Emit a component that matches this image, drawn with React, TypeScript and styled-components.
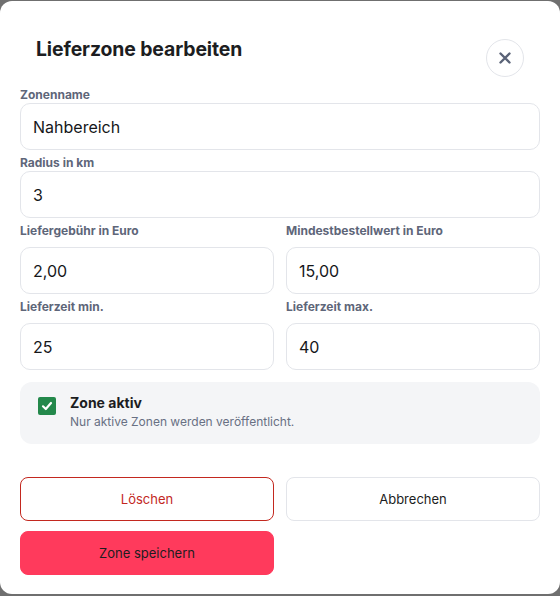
import React, { useState } from 'react'
import styled, { createGlobalStyle } from 'styled-components'

const GlobalStyle = createGlobalStyle`
  html, body {
    margin: 0;
    padding: 0;
    background: #6f6f6f;
    font-family: Inter, "Noto Sans", sans-serif;
  }
  * {
    box-sizing: border-box;
  }
`

const Backdrop = styled.div`
  padding-top: 1px;
  height: 596px;
  overflow: hidden;
`

const Panel = styled.div`
  background: #ffffff;
  border-radius: 12px;
  height: 593px;
  padding: 0 20px;
  display: flex;
  flex-direction: column;
`

const Header = styled.div`
  display: flex;
  justify-content: space-between;
  align-items: flex-start;
  padding: 35px 16px 0 16px;
  margin-bottom: 10px;
`

const Title = styled.h2`
  margin: 0;
  font-size: 19.4px;
  line-height: 26px;
  font-weight: 700;
  color: #1c1d21;
  letter-spacing: -0.1px;
`

const CloseButton = styled.button`
  width: 38px;
  height: 38px;
  margin-top: 3px;
  border-radius: 50%;
  border: 1px solid #e3e5ea;
  background: #ffffff;
  display: flex;
  align-items: center;
  justify-content: center;
  padding: 0;
  cursor: pointer;
`

const Field = styled.label<{ wide?: boolean }>`
  display: flex;
  flex-direction: column;
  gap: ${props => props.wide ? '0' : '8px'};
  margin-bottom: 5px;
`

const Label = styled.span`
  font-size: 12px;
  line-height: 16px;
  font-weight: 700;
  color: #5e6679;
`

const Input = styled.input`
  height: 47px;
  width: 100%;
  border: 1px solid #e3e5ea;
  border-radius: 10px;
  padding: 0 12px;
  font-family: inherit;
  font-size: 16px;
  color: #16171a;
  background: #ffffff;

  &:focus {
    outline: none;
  }
`

const Row = styled.div`
  display: grid;
  grid-template-columns: 1fr 1fr;
  column-gap: 12px;
`

const ActiveBox = styled.div`
  margin-top: 7px;
  background: #f4f5f7;
  border-radius: 12px;
  height: 62px;
  display: flex;
  align-items: flex-start;
  padding: 12px 18px;
  gap: 14px;
`

const Check = styled.button<{ checked: boolean }>`
  width: 18px;
  height: 18px;
  margin-top: 3px;
  border-radius: 2px;
  border: none;
  padding: 0;
  background: ${props => props.checked ? '#23884b' : '#ffffff'};
  display: flex;
  align-items: center;
  justify-content: center;
  cursor: pointer;
`

const CheckText = styled.div`
  display: flex;
  flex-direction: column;
`

const CheckTitle = styled.span`
  font-size: 14px;
  line-height: 18px;
  font-weight: 700;
  color: #1c1d21;
`

const CheckHint = styled.span`
  margin-top: 2px;
  font-size: 12px;
  line-height: 16px;
  color: #687083;
`

const Actions = styled.div`
  margin-top: 33px;
  display: grid;
  grid-template-columns: 1fr 1fr;
  column-gap: 12px;
  row-gap: 10px;
`

type ButtonProps = {
  variant: 'danger' | 'plain' | 'primary'
}

const Button = styled.button<ButtonProps>`
  height: 44px;
  border-radius: 8px;
  font-family: inherit;
  font-size: 13px;
  cursor: pointer;
  border: 1px solid ${props =>
    props.variant === 'danger' ? '#c3281f' : props.variant === 'plain' ? '#e3e5ea' : '#ff3a5c'};
  background: ${props => props.variant === 'primary' ? '#ff3a5c' : '#ffffff'};
  color: ${props => props.variant === 'danger' ? '#c3281f' : '#1c1d21'};
`

function App() {
  const [name, setName] = useState('Nahbereich')
  const [radius, setRadius] = useState('3')
  const [fee, setFee] = useState('2,00')
  const [minOrder, setMinOrder] = useState('15,00')
  const [minTime, setMinTime] = useState('25')
  const [maxTime, setMaxTime] = useState('40')
  const [active, setActive] = useState(true)

  return (
    <Backdrop>
      <GlobalStyle />
      <Panel>
        <Header>
          <Title>Lieferzone bearbeiten</Title>
          <CloseButton aria-label='Schließen'>
            <svg width='14' height='14' viewBox='0 0 14 14'>
              <path d='M2.5 2.5 L11.5 11.5 M11.5 2.5 L2.5 11.5' stroke='#5a6377' strokeWidth='2.4' strokeLinecap='round' />
            </svg>
          </CloseButton>
        </Header>

        <Field wide>
          <Label>Zonenname</Label>
          <Input value={name} onChange={e => setName(e.target.value)} />
        </Field>

        <Field wide>
          <Label>Radius in km</Label>
          <Input value={radius} onChange={e => setRadius(e.target.value)} />
        </Field>

        <Row>
          <Field>
            <Label>Liefergebühr in Euro</Label>
            <Input value={fee} onChange={e => setFee(e.target.value)} />
          </Field>
          <Field>
            <Label>Mindestbestellwert in Euro</Label>
            <Input value={minOrder} onChange={e => setMinOrder(e.target.value)} />
          </Field>
        </Row>

        <Row>
          <Field>
            <Label>Lieferzeit min.</Label>
            <Input value={minTime} onChange={e => setMinTime(e.target.value)} />
          </Field>
          <Field>
            <Label>Lieferzeit max.</Label>
            <Input value={maxTime} onChange={e => setMaxTime(e.target.value)} />
          </Field>
        </Row>

        <ActiveBox>
          <Check checked={active} onClick={() => setActive(!active)} aria-label='Zone aktiv'>
            {active && (
              <svg width='12' height='12' viewBox='0 0 12 12'>
                <path d='M2 6.3 L4.8 9 L10 3' stroke='#ffffff' strokeWidth='2.2' fill='none' strokeLinecap='round' strokeLinejoin='round' />
              </svg>
            )}
          </Check>
          <CheckText>
            <CheckTitle>Zone aktiv</CheckTitle>
            <CheckHint>Nur aktive Zonen werden veröffentlicht.</CheckHint>
          </CheckText>
        </ActiveBox>

        <Actions>
          <Button variant='danger'>Löschen</Button>
          <Button variant='plain'>Abbrechen</Button>
          <Button variant='primary'>Zone speichern</Button>
        </Actions>
      </Panel>
    </Backdrop>
  )
}

export default App
